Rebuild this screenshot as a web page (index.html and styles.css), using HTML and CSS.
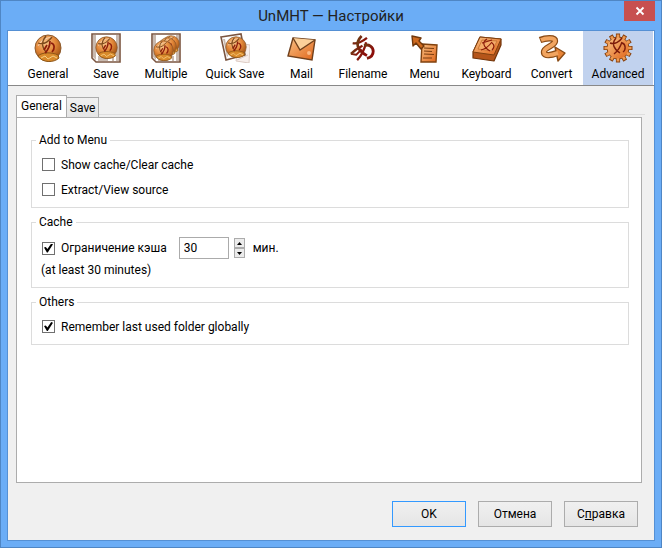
FILE: index.html
```
<!DOCTYPE html>
<html lang="ru">
	<head>
		<meta charset="utf-8">
		<title>UnMHT — Настройки</title>
		<link rel="stylesheet" href="styles.css">
	</head>
	<body>
		<!-- shared shapes for the toolbar icons -->
		<svg class="defs" width="0" height="0" aria-hidden="true">
			<defs>
				<radialGradient id="amber" cx="40%" cy="30%" r="75%">
					<stop offset="0" stop-color="#f8c58a"/>
					<stop offset="0.5" stop-color="#e4893a"/>
					<stop offset="1" stop-color="#9a4a0c"/>
				</radialGradient>
				<linearGradient id="orange" x1="0" y1="0" x2="1" y2="1">
					<stop offset="0" stop-color="#f9c184"/>
					<stop offset="1" stop-color="#e0651a"/>
				</linearGradient>
				<linearGradient id="ink" x1="0" y1="0" x2="1" y2="0.4">
					<stop offset="0" stop-color="#6b3c14"/>
					<stop offset="1" stop-color="#8c0e0a"/>
				</linearGradient>
				<symbol id="mark" viewBox="0 0 28 28" overflow="visible">
					<g fill="none" stroke="url(#ink)" stroke-linejoin="round">
						<path stroke-width="2.6" d="M3 8 C8 9 14 6 19 2"/>
						<path stroke-width="3" d="M13 0 C5 8 8 16 19 22"/>
						<path stroke-width="2.6" d="M18 7 C16 16 13 22 8 27 M1 20 C6 15 10 13 14 11"/>
						<path stroke-width="2" d="M1 20 L7 21 L13 15"/>
						<path stroke-width="3.2" d="M16 11 C21 8 26 13 26 17 C26 21 23 24 19 25"/>
					</g>
				</symbol>
				<symbol id="ball" viewBox="0 0 28 28">
					<circle cx="14" cy="14" r="13" fill="url(#amber)" stroke="#8d5a2c"/>
					<path d="M4 22 C8 18 18 18 24 21 L25 24 C20 29 8 29 4 22z" fill="#d98a2b" stroke="#8c5416"/>
					<path d="M7 24 L11 22 L14 25 L19 22 L23 24" fill="none" stroke="#f6cf83"/>
					<path d="M4 12 C7 6 12 4 18 3" fill="none" stroke="#fff" stroke-opacity="0.5"/>
					<path d="M4 9 C10 11 15 7 18 3 M12 2 C7 8 8 14 13 19" fill="none" stroke="#7d4a1c" stroke-width="1.3"/>
					<path d="M16 7 C16 12 14 16 11 19 M13 11 L10 16 M17 9 C21 10 21 15 18 18" fill="none" stroke="#8d1d0b" stroke-width="1.7"/>
				</symbol>
				<symbol id="frame" viewBox="0 0 30 30">
					<path d="M1 1 H29 V29 H5 L1 25z" fill="#fff" stroke="#7b5540" stroke-width="1.6"/>
					<path d="M2 2 H5 V27 L2 24z M25 2 H28 V28 H25z" fill="#c9b9ae"/>
					<path d="M7 23 H23 V28 H7z" fill="#c9b9ae"/>
					<path d="M17 24 H21 V28 H17z" fill="#fff"/>
				</symbol>
			</defs>
		</svg>

		<div class="window">
			<div class="titlebar">
				<h1>UnMHT — Настройки</h1>
				<button type="button" class="close" aria-label="Закрыть">
					<svg width="10" height="10" viewBox="0 0 10 10"><path d="M1.5 1.5 L8.5 8.5 M8.5 1.5 L1.5 8.5" stroke="#fff" stroke-width="1.8"/></svg>
				</button>
			</div>

			<div class="content">
				<nav class="toolbar">
					<button type="button" class="tool">
						<svg class="icon" viewBox="0 0 30 30"><use href="#ball" x="1" y="1" width="28" height="28"/></svg>
						General
					</button>
					<button type="button" class="tool">
						<svg class="icon" viewBox="0 0 30 30">
							<use href="#frame" width="30" height="30"/>
							<use href="#ball" x="4" y="3" width="23" height="23"/>
						</svg>
						Save
					</button>
					<button type="button" class="tool">
						<svg class="icon" viewBox="0 0 30 30">
							<use href="#frame" width="30" height="30"/>
							<use href="#ball" x="11" y="2" width="18" height="18"/>
							<use href="#ball" x="7" y="4" width="19" height="19"/>
							<use href="#ball" x="2" y="7" width="21" height="21"/>
						</svg>
						Multiple
					</button>
					<button type="button" class="tool">
						<svg class="icon" viewBox="0 0 30 30">
							<path d="M19 10 L30 12 L29 30 L16 28z" fill="#f7efec" stroke="#dccbc3"/>
							<path d="M1 4 L21 1 L25 22 L6 27z" fill="#fff" stroke="#7b5540" stroke-width="1.6"/>
							<path d="M3 6 L5 6 L8 23 L7 24z" fill="#c9b9ae"/>
							<use href="#ball" x="5" y="3" width="22" height="22"/>
							<path d="M17 27 L28 22" stroke="#dccbc3"/>
						</svg>
						Quick Save
					</button>
					<button type="button" class="tool">
						<svg class="icon" viewBox="0 0 30 30">
							<path d="M6 5 L28 7 L25 27 L1 23z" fill="url(#orange)" stroke="#70401c" stroke-width="1.4"/>
							<path d="M6 5 L13 17 L28 7" fill="#fbd09a" stroke="#70401c" stroke-width="1.4"/>
							<circle cx="22" cy="20" r="2" fill="#f9b883"/>
						</svg>
						Mail
					</button>
					<button type="button" class="tool">
						<svg class="icon" viewBox="0 0 30 30"><use href="#mark" x="2" y="3" width="25" height="25"/></svg>
						Filename
					</button>
					<button type="button" class="tool">
						<svg class="icon" viewBox="0 0 30 30">
							<path d="M12 11 L27 12 L26 29 L11 29z" fill="url(#orange)" stroke="#80420f" stroke-width="1.4"/>
							<path d="M14 15 L24 15.5 M14 18 L22 18.5 M14 21 L24 21.5 M13 25 L22 25" stroke="#7a3d10" stroke-width="1.2"/>
							<path d="M2 3 L11 5 L9 8 L14 13 L11 16 L6 10 L3 13z" fill="#cf6a1f" stroke="#70380c" stroke-width="1.4" stroke-linejoin="round"/>
						</svg>
						Menu
					</button>
					<button type="button" class="tool">
						<svg class="icon" viewBox="0 0 30 30">
							<path d="M8 4 L29 6 L29 12 L22 28 L1 25 L1 19z" fill="#b5551a" stroke="#703309" stroke-width="1.2" stroke-linejoin="round"/>
							<path d="M8 4 L29 6 L22 22 L1 19z" fill="url(#orange)" stroke="#80400f"/>
							<path d="M10 7 L25 8 L20 18 L6 16z" fill="#f4ab69" stroke="#c3702e" stroke-width="0.8"/>
							<path d="M10 10 L20 7 M15 6 C10 9 11 14 18 18 M20 9 C17 13 14 16 9 17 M20 10 C23 12 22 15 20 17" fill="none" stroke="#8d1d0b" stroke-width="1.2"/>
						</svg>
						Keyboard
					</button>
					<button type="button" class="tool">
						<svg class="icon" viewBox="0 0 30 30">
							<path d="M3 7 C8 5 18 4 18 8 C18 13 7 14 7 19 C7 24 15 22 20 20" fill="none" stroke="#8a4b15" stroke-width="6.4"/>
							<path d="M18 14 L28 20 L21 28z" fill="#e98538" stroke="#8a4b15" stroke-width="1.4" stroke-linejoin="round"/>
							<path d="M4 7 C8 5 18 4 18 8 C18 13 7 14 7 19 C7 24 15 22 21 20" fill="none" stroke="#f2a560" stroke-width="4"/>
						</svg>
						Convert
					</button>
					<button type="button" class="tool selected">
						<svg class="icon" viewBox="0 0 30 30">
							<path stroke="#8a4310" stroke-width="4.2" d="M15 0.5 V29.5 M0.5 15 H29.5 M7.75 2.4 L22.25 27.6 M22.25 2.4 L7.75 27.6 M2.4 7.75 L27.6 22.25 M27.6 7.75 L2.4 22.25"/>
							<circle cx="15" cy="15" r="11.4" fill="#8a4310"/>
							<path stroke="#ee9a52" stroke-width="2.6" d="M15 1.5 V28.5 M1.5 15 H28.5 M8.25 3.3 L21.75 26.7 M21.75 3.3 L8.25 26.7 M3.3 8.25 L26.7 21.75 M26.7 8.25 L3.3 21.75"/>
							<circle cx="15" cy="15" r="10.5" fill="url(#orange)"/>
							<path d="M7 10 C12 12 17 8 19 5 M13 5 C8 11 11 16 17 20 M19 9 C17 15 15 18 11 21 M19 10 C23 11 23 17 20 19" fill="none" stroke="#7d1c0b" stroke-width="1.4"/>
						</svg>
						Advanced
					</button>
				</nav>

				<main>
					<div class="tabs" role="tablist">
						<button type="button" class="tab active" role="tab" aria-selected="true">General</button>
						<button type="button" class="tab" role="tab" aria-selected="false">Save</button>
					</div>
					<div class="panel" role="tabpanel">
						<fieldset class="group">
							<legend>Add to Menu</legend>
							<label class="check"><input type="checkbox">Show cache/Clear cache</label>
							<label class="check"><input type="checkbox">Extract/View source</label>
						</fieldset>
						<fieldset class="group">
							<legend>Cache</legend>
							<div class="limit">
								<label class="check"><input type="checkbox" checked>Ограничение кэша</label>
								<input type="text" class="minutes" id="minutes" value="30">
								<div class="spinner">
									<button type="button" aria-label="Больше"><svg width="5" height="3" viewBox="0 0 5 3"><path d="M0 3 L2.5 0 L5 3z"/></svg></button>
									<button type="button" aria-label="Меньше"><svg width="5" height="3" viewBox="0 0 5 3"><path d="M0 0 L2.5 3 L5 0z"/></svg></button>
								</div>
								<label for="minutes">мин.</label>
							</div>
							<p class="note">(at least 30 minutes)</p>
						</fieldset>
						<fieldset class="group">
							<legend>Others</legend>
							<label class="check"><input type="checkbox" checked>Remember last used folder globally</label>
						</fieldset>
					</div>
				</main>

				<footer class="buttons">
					<button type="button" class="default">OK</button>
					<button type="button">Отмена</button>
					<button type="button">С<u>п</u>равка</button>
				</footer>
			</div>
		</div>
	</body>
</html>
```
FILE: styles.css
```
*
{
	box-sizing: border-box;
}

body
{
	margin: 0;
	font: 12px/16px Roboto, "Open Sans", sans-serif;
	color: #000;
}

button, input
{
	font: inherit;
	color: inherit;
	margin: 0;
	padding: 0;
}

.defs
{
	position: absolute;
}

.window
{
	display: flex;
	flex-direction: column;
	min-height: 100vh;
	padding: 0 7px 7px;
	border: 1px solid #4f86c4;
	background: #6badf6;
}

.titlebar
{
	position: relative;
	height: 29px;
}

.titlebar h1
{
	margin: 0;
	font-size: 15px;
	font-weight: normal;
	line-height: 30px;
	text-align: center;
	color: #222;
}

.close
{
	position: absolute;
	top: 0;
	right: -1px;
	display: flex;
	align-items: center;
	justify-content: center;
	width: 31px;
	height: 20px;
	border: 0;
	background: #c75050;
}

.content
{
	flex: 1;
	display: flex;
	flex-direction: column;
	margin: 0 -1px -1px;
	border: 1px solid #5590d4;
	background: #f0f0f0;
}

/* toolbar */
.toolbar
{
	display: grid;
	grid-template-columns: 58fr 58fr 62fr 76fr 57fr 66fr 57fr 67fr 63fr 70fr;
	height: 55px;
	padding: 0 1px 0 11px;
	border-bottom: 1px solid #888;
	background: #fff;
}

.tool
{
	display: flex;
	flex-direction: column;
	align-items: center;
	gap: 3px;
	padding-top: 2px;
	border: 0;
	background: none;
	white-space: nowrap;
}

.tool.selected
{
	background: #c1d2ee;
}

.icon
{
	width: 30px;
	height: 30px;
}

/* tabs */
main
{
	flex: 1;
	display: flex;
	flex-direction: column;
	padding: 9px 12px 0 8px;
}

.tabs
{
	display: flex;
	align-items: flex-end;
	height: 22px;
}

.tabs::after
{
	content: "";
	flex: 1;
	height: 2px;
	margin-right: -3px;
	border-top: 1px solid #dedede;
}

.tab
{
	height: 20px;
	padding: 0 3px;
	border: 1px solid #acacac;
	border-bottom: 0;
	border-left: 0;
	background: linear-gradient(#f0f0f0, #e5e5e5);
}

.tab.active
{
	height: 22px;
	padding: 0 4px 2px;
	border-left: 1px solid #acacac;
	background: #fff;
}

.panel
{
	flex: 1;
	display: flex;
	flex-direction: column;
	gap: 6px;
	padding: 14px 12px 14px 14px;
	border: 1px solid #acacac;
	background: #fff;
}

.group
{
	margin: 0;
	padding: 4px 8px 5px 10px;
	border: 1px solid #dcdcdc;
}

.group legend
{
	margin-left: -6px;
	padding: 0 3px;
}

.check
{
	display: flex;
	align-items: center;
	gap: 6px;
	height: 25px;
}

.check input
{
	appearance: none;
	display: grid;
	place-items: center;
	width: 13px;
	height: 13px;
	border: 1px solid #707070;
	background: #fff;
}

.check input:checked::before
{
	content: "";
	width: 9px;
	height: 9px;
	background: #000;
	clip-path: polygon(0 45%, 20% 40%, 38% 62%, 80% 0, 100% 8%, 42% 100%, 32% 100%);
}

.limit
{
	display: flex;
	align-items: center;
	height: 28px;
}

.minutes
{
	width: 50px;
	height: 22px;
	margin: 0 5px 0 12px;
	padding: 0 4px;
	border: 1px solid #ababab;
	background: #fff;
}

.spinner
{
	display: flex;
	flex-direction: column;
	margin-right: 8px;
}

.spinner button
{
	display: flex;
	align-items: center;
	justify-content: center;
	width: 11px;
	height: 10px;
	border: 1px solid #acacac;
	background: #ececec;
}

.note
{
	margin: 0 0 4px -1px;
}

/* dialog buttons */
.buttons
{
	display: flex;
	justify-content: flex-end;
	gap: 12px;
	padding: 18px 16px 13px;
}

.buttons button
{
	width: 74px;
	height: 26px;
	border: 1px solid #acacac;
	background: linear-gradient(#f0f0f0, #e5e5e5);
}

.buttons .default
{
	border-color: #3399ff;
}
```
